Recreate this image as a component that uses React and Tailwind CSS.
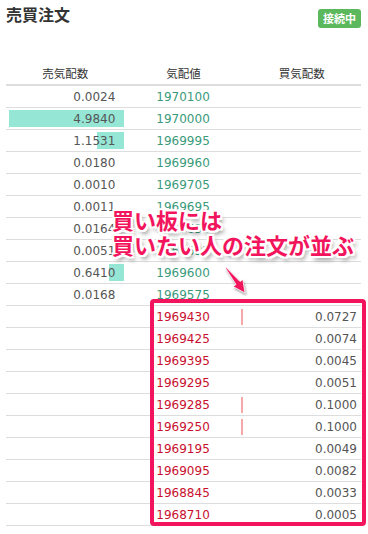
import React from 'react';

const asks = [
  ['0.0024', '1970100'],
  ['4.9840', '1970000'],
  ['1.1531', '1969995'],
  ['0.0180', '1969960'],
  ['0.0010', '1969705'],
  ['0.0011', '1969695'],
  ['0.0164', '1969635'],
  ['0.0051', '1969635'],
  ['0.6410', '1969600'],
  ['0.0168', '1969575'],
];

const bids = [
  ['1969430', '0.0727'],
  ['1969425', '0.0074'],
  ['1969395', '0.0045'],
  ['1969295', '0.0051'],
  ['1969285', '0.1000'],
  ['1969250', '0.1000'],
  ['1969195', '0.0049'],
  ['1969095', '0.0082'],
  ['1968845', '0.0033'],
  ['1968710', '0.0005'],
];

const SCALE = 23.1;
const barW = (v) => {
  const w = Math.round(parseFloat(v) * SCALE);
  return w < 1 ? 0 : w;
};

const num = "font-['DejaVu_Sans',sans-serif] text-[12px]";

const AskRow = ({ qty, price }) => (
  <div className="grid grid-cols-3 h-[22px] border-b border-[#dddddd]">
    <div className="relative flex items-center justify-end pr-[9px]">
      <div
        className="absolute right-0 top-[2px] bottom-[2px] bg-[#95e6d5]"
        style={{ width: barW(qty) }}
      />
      <span className={`relative text-[#555] ${num}`}>{qty}</span>
    </div>
    <div className="flex items-center pl-[32px]">
      <span className={`text-[#3a9a7a] ${num}`}>{price}</span>
    </div>
    <div />
  </div>
);

const BidRow = ({ price, qty }) => (
  <div className="grid grid-cols-3 h-[22px] border-b border-[#dddddd]">
    <div />
    <div className="flex items-center pl-[32px]">
      <span className={`text-[#c8102e] ${num}`}>{price}</span>
    </div>
    <div className="relative flex items-center justify-end pr-[4px]">
      <div
        className="absolute left-[-2px] top-[3px] bottom-[2px] bg-[#f7a8a8]"
        style={{ width: barW(qty) }}
      />
      <span className={`relative text-[#555] ${num}`}>{qty}</span>
    </div>
  </div>
);

export default function App() {
  return (
    <div className="relative w-[368px] h-[534px] bg-white overflow-hidden font-['Noto_Sans_CJK_JP',sans-serif]">
      <div className="flex items-start justify-between pl-[6px] pr-[7px] pt-[3px]">
        <h2 className="text-[16px] leading-[22px] font-bold text-[#333]">売買注文</h2>
        <span className="mt-[6px] h-[19px] px-[5px] flex items-center rounded-[3px] bg-[#5cb85c] text-white text-[11px] font-bold">
          接続中
        </span>
      </div>

      <div className="mx-[6px] mt-[35px] w-[355px]">
        <div className="grid grid-cols-3 h-[23px] border-b-2 border-[#dddddd] text-[11.5px] text-[#333] text-center items-center">
          <div>売気配数</div>
          <div>気配値</div>
          <div>買気配数</div>
        </div>
        {asks.map(([q, p], i) => (
          <AskRow key={'a' + i} qty={q} price={p} />
        ))}
        {bids.map(([p, q], i) => (
          <BidRow key={'b' + i} price={p} qty={q} />
        ))}
      </div>

      {/* annotation overlay */}
      <div className="absolute left-[150px] top-[299px] w-[216px] h-[227px] border-[4px] border-[#f2145c] rounded-[4px]" />

      <div className="absolute left-[112px] top-[207px] text-[22px] leading-[25px] font-bold text-[#f2145c] [text-shadow:-2px_-2px_0_#fff,2px_-2px_0_#fff,-2px_2px_0_#fff,2px_2px_0_#fff,0_2px_0_#fff,0_-2px_0_#fff,2px_0_0_#fff,-2px_0_0_#fff,3px_4px_4px_rgba(0,0,0,0.45)]">
        <div>買い板には</div>
        <div>買いたい人の注文が並ぶ</div>
      </div>

      <svg
        className="absolute left-[218px] top-[262px] drop-shadow-[1px_2px_1px_rgba(0,0,0,0.35)]"
        width="32"
        height="36"
        viewBox="0 0 32 36"
      >
        <polygon
          points="8.4,5.7 22,19.5 24.8,17.4 27,31 15.2,24.6 18,22.5 7.6,6.3"
          fill="#f2145c"
          stroke="#fff"
          strokeWidth="0.8"
          strokeLinejoin="round"
        />
      </svg>
    </div>
  );
}
